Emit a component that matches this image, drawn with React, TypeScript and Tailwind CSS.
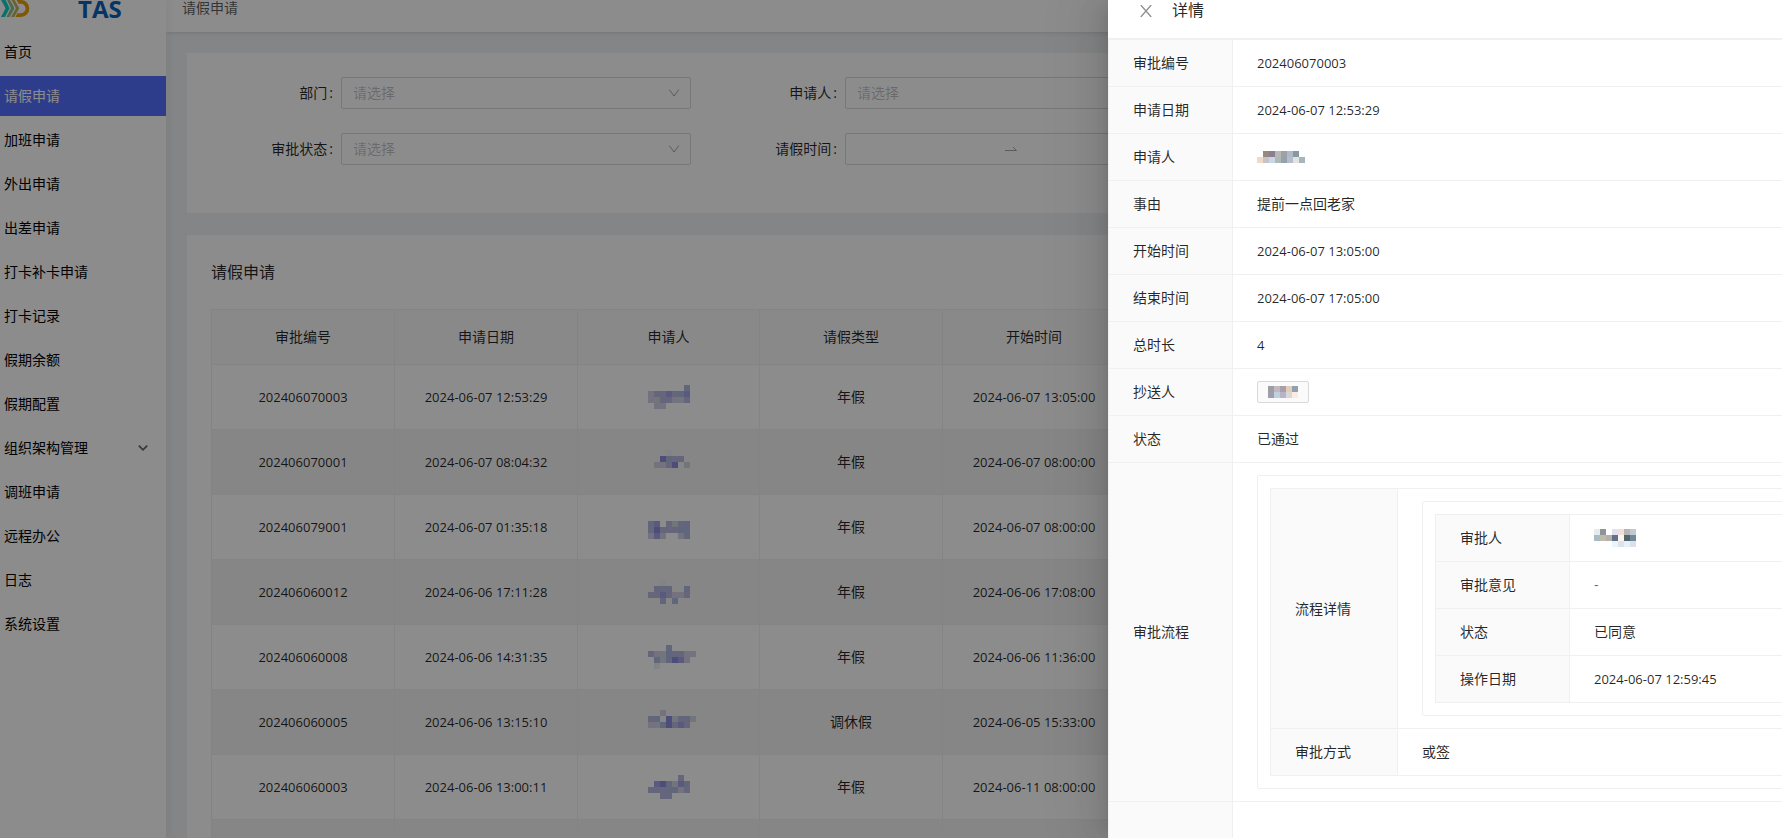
import { ReactNode, useState } from "react";
import clsx from "clsx";

const menu = [
  "首页",
  "请假申请",
  "加班申请",
  "外出申请",
  "出差申请",
  "打卡补卡申请",
  "打卡记录",
  "假期余额",
  "假期配置",
  "组织架构管理",
  "调班申请",
  "远程办公",
  "日志",
  "系统设置",
];

// Tons usados nos nomes ocultos da tabela
const tones: Record<string, string> = {
  a: "#a6a3ea",
  b: "#b9b8e2",
  c: "#d4d0e6",
  d: "#d0d8e2",
  e: "#b0bce4",
  f: "#eeeff4",
  g: "#8b8fdc",
};

const leaves = [
  { id: "202406070003", date: "2024-06-07 12:53:29", type: "年假", start: "2024-06-07 13:05:00", name: ["......e", "cbbabea", "cdbbcdb", ".cc...."] },
  { id: "202406070001", date: "2024-06-07 08:04:32", type: "年假", start: "2024-06-07 08:00:00", name: ["...f...", "..gebb.", ".ccbg.d", "......."] },
  { id: "202406079001", date: "2024-06-07 01:35:18", type: "年假", start: "2024-06-07 08:00:00", name: [".......", "ea.bdbe", "bgbbbee", "cac..db"] },
  { id: "202406060012", date: "2024-06-06 17:11:28", type: "年假", start: "2024-06-06 17:08:00", name: ["..f....", ".ebb..e", "bbabccb", "..e.e.."] },
  { id: "202406060008", date: "2024-06-06 14:31:35", type: "年假", start: "2024-06-06 11:36:00", name: ["...e...", "bcdebbcd", ".edegac", ".f....."] },
  { id: "202406060005", date: "2024-06-06 13:15:10", type: "调休假", start: "2024-06-05 15:33:00", name: ["..c....", "be.gdbed", "cdegbab", "......."] },
  { id: "202406060003", date: "2024-06-06 13:00:11", type: "年假", start: "2024-06-11 08:00:00", name: [".....b.", ".agbdae", "bbbeecb", "..bb..."] },
];

const applicantCells = [
  [".", "#948a80", "#8c8090", "#b8b8ba", "#9da2a5", "#adbbc8", "#8797a3"],
  ["#f0d9c5", "#c9c2c9", "#c4dae8", "#b0b9b0", "#93a2b2", "#b4bdc9", "#e5e3dd", "#a5b6bd"],
];
const ccCells = [
  ["#9c9ea4", "#c4b8c0", "#a8a0aa", "#e0cdba", "#93a0ad"],
  ["#9c9eaa", "#bfd0de", "#b9b4c4", "#dcd6d8", "#fcece0"],
];
const approverCells = [
  ["#e6ecec", "#8f9494", ".", "#dfe1ee", "#f2dcdc", "#b5b5b3", "#c5c8d0"],
  ["#a8bcc4", "#bcbbac", "#b5b0ac", "#65708a", "#faf6ec", "#53646c", "#6e8a96"],
  [".", ".", ".", "#eaf4fa", "#e0e2ea", "#e6f2fa", "#dde0e8"],
];

function Mosaic({ cells, cols }: { cells: string[][]; cols: number }) {
  return (
    <svg width={cols * 6} height={cells.length * 6} className="block overflow-visible" shapeRendering="crispEdges" aria-hidden="true">
      {cells.map((row, y) =>
        row.map((fill, x) => fill !== "." && <rect key={`${x}-${y}`} x={x * 6} y={y * 6} width="6" height="6" fill={fill} />)
      )}
    </svg>
  );
}

function Chevron({ className }: { className?: string }) {
  return (
    <svg viewBox="0 0 12 12" fill="none" stroke="currentColor" className={clsx("size-3", className)} aria-hidden="true">
      <path d="M1.2 2.6 6 9l4.8-6.4" />
    </svg>
  );
}

function Logo() {
  return (
    <svg width="30" height="18" viewBox="0 0 30 18" aria-hidden="true">
      <path d="M1 0h4.6l4 8.2-4.6 8.8H1l4.6-8.8z" fill="#0fd0cb" />
      <path d="M7 0h3l4.6 8.2L9.600 17H6.400l4.600-8.800z" fill="#8fc08a" />
      <path d="M11.600 0h3l4.600 8.200-5 8.800h-3.200l5-8.800z" fill="#c0b060" />
      <path d="M16.600 0H21a8.300 8.500 0 0 1 0 17h-5.600l2-3.800H21a4.600 4.700 0 0 0 0-9.400h-2.400z" fill="#e8a00c" />
    </svg>
  );
}

function Sidebar() {
  const [active, setActive] = useState("请假申请");

  return (
    <aside className="relative z-10 w-[166px] shrink-0 bg-white shadow-[2px_0_8px_rgba(29,35,41,0.06)]">
      <div className="flex h-8 items-start">
        <Logo />
        <span className="ml-12 text-2xl leading-[18px] font-bold text-[#0a62bc]">TAS</span>
      </div>
      <nav className="flex flex-col gap-1">
        {menu.map((item) => (
          <button
            key={item}
            type="button"
            onClick={() => setActive(item)}
            className={clsx(
              "flex h-10 items-center justify-between pl-1 pr-[17px] text-left text-sm",
              active === item ? "bg-[#556dff] text-white" : "text-black"
            )}
          >
            {item}
            {item === "组织架构管理" && (
              <svg viewBox="0 0 12 12" fill="none" stroke="currentColor" strokeWidth="1.8" className="size-3 text-black/60" aria-hidden="true">
                <path d="m1.8 3.6 4.2 4.2 4.2-4.2" />
              </svg>
            )}
          </button>
        ))}
      </nav>
    </aside>
  );
}

function Field({ id, label, children }: { id: string; label: string; children: ReactNode }) {
  return (
    <div className="flex h-8 items-center">
      <label htmlFor={id} className="w-[130px] shrink-0 text-right">
        {label}
        <span className="ml-0.5 mr-2">:</span>
      </label>
      {children}
    </div>
  );
}

function SelectField({ id, label }: { id: string; label: string }) {
  return (
    <Field id={id} label={label}>
      <div className="relative flex-1">
        <select id={id} defaultValue="" className="h-8 w-full appearance-none rounded-xs border border-[#d9d9d9] bg-white px-[11px] text-black/25">
          <option value="">请选择</option>
        </select>
        <Chevron className="pointer-events-none absolute right-[11px] top-[10px] text-black/35" />
      </div>
    </Field>
  );
}

function SearchForm() {
  return (
    <form className="grid grid-cols-3 gap-6 bg-white px-6 pb-12 pt-6">
      <SelectField id="dept" label="部门" />
      <SelectField id="applicant" label="申请人" />
      <div />
      <SelectField id="status" label="审批状态" />
      <Field id="start" label="请假时间">
        <div className="flex h-8 flex-1 items-center rounded-xs border border-[#d9d9d9] px-[11px]">
          <input id="start" type="text" className="w-0 flex-1 outline-none" />
          <svg viewBox="0 0 12 6" fill="none" stroke="currentColor" className="mx-2 h-[6px] w-3 text-black/35" aria-hidden="true">
            <path d="M0 4.5h11.4L8 1" />
          </svg>
          <input type="text" aria-label="结束时间" className="mr-[18px] w-0 flex-1 outline-none" />
        </div>
      </Field>
    </form>
  );
}

function LeaveTable() {
  const cell = "border-b border-r border-[#f0f0f0] text-center font-normal";

  return (
    <section className="flex-1 bg-white px-6">
      <h2 className="flex h-[74px] items-center text-base">请假申请</h2>
      <table className="w-[915px] table-fixed border-separate border-spacing-0 border-l border-t border-[#f0f0f0]">
        <colgroup>
          <col className="w-[183px]" />
          <col className="w-[183px]" />
          <col className="w-[182px]" />
          <col className="w-[183px]" />
          <col className="w-[183px]" />
        </colgroup>
        <thead>
          <tr className="h-[55px] bg-[#fafafa]">
            {["审批编号", "申请日期", "申请人", "请假类型", "开始时间"].map((h) => (
              <th key={h} className={cell}>{h}</th>
            ))}
          </tr>
        </thead>
        <tbody>
          {leaves.map((l) => (
            <tr key={l.id} className="h-[65px] even:bg-[#f5f5f5]">
              <td className={clsx(cell, "text-[13px]")}>{l.id}</td>
              <td className={clsx(cell, "text-[13px]")}>{l.date}</td>
              <td className={cell}>
                <a href="#" aria-label="申请人" className="inline-block align-middle">
                  <Mosaic cols={7} cells={l.name.map((r) => r.split("").map((c) => tones[c] ?? "."))} />
                </a>
              </td>
              <td className={cell}>{l.type}</td>
              <td className={clsx(cell, "text-[13px]")}>{l.start}</td>
            </tr>
          ))}
          <tr className="h-[65px] even:bg-[#f5f5f5]">
            {[0, 1, 2, 3, 4].map((i) => (
              <td key={i} className={cell} />
            ))}
          </tr>
        </tbody>
      </table>
    </section>
  );
}

const thBase = "border-b border-r border-[#f0f0f0] bg-[#fafafa] px-6 py-3 text-left font-normal";
const tdBase = "border-b border-[#f0f0f0] px-6 py-3";

function Row({ label, labelWidth, numeric, children }: { label: string; labelWidth: string; numeric?: boolean; children?: ReactNode }) {
  return (
    <tr className="h-[47px]">
      <th scope="row" className={clsx(thBase, labelWidth)}>{label}</th>
      <td className={clsx(tdBase, numeric && "text-[13px]")}>{children}</td>
    </tr>
  );
}

function Descriptions({ children }: { children: ReactNode }) {
  return (
    <table className="w-full table-fixed border-separate border-spacing-0 border-l border-t border-[#f0f0f0]">
      <tbody>{children}</tbody>
    </table>
  );
}

function DetailDrawer({ onClose }: { onClose: () => void }) {
  return (
    <aside className="absolute inset-y-0 right-0 w-[674px] max-w-full overflow-hidden bg-white shadow-[-6px_0_16px_-8px_rgba(0,0,0,0.12),-9px_0_28px_rgba(0,0,0,0.08),-12px_0_48px_16px_rgba(0,0,0,0.05)]">
      <header className="flex h-[39px] items-start border-b border-[#f0f0f0] pl-8">
        <button type="button" aria-label="关闭" onClick={onClose} className="mt-[5px] text-black/45">
          <svg width="12" height="12" viewBox="0 0 12 12" fill="none" stroke="currentColor" strokeWidth="1.3">
            <path d="M.8 0 11.2 12M11.2 0 .8 12" />
          </svg>
        </button>
        <h2 className="ml-5 text-base leading-5">详情</h2>
      </header>
      {/* largura extra: as bordas direitas ficam fora da área visível */}
      <div className="w-[760px]">
        <Descriptions>
          <Row label="审批编号" labelWidth="w-[124px]" numeric>202406070003</Row>
          <Row label="申请日期" labelWidth="w-[124px]" numeric>2024-06-07 12:53:29</Row>
          <Row label="申请人" labelWidth="w-[124px]"><Mosaic cols={8} cells={applicantCells} /></Row>
          <Row label="事由" labelWidth="w-[124px]">提前一点回老家</Row>
          <Row label="开始时间" labelWidth="w-[124px]" numeric>2024-06-07 13:05:00</Row>
          <Row label="结束时间" labelWidth="w-[124px]" numeric>2024-06-07 17:05:00</Row>
          <Row label="总时长" labelWidth="w-[124px]" numeric>4</Row>
          <Row label="抄送人" labelWidth="w-[124px]">
            <span className="flex h-[22px] w-[52px] items-center justify-center rounded-xs border border-[#d9d9d9] bg-[#fafafa]">
              <Mosaic cols={5} cells={ccCells} />
            </span>
          </Row>
          <Row label="状态" labelWidth="w-[124px]">已通过</Row>
          <Row label="审批流程" labelWidth="w-[124px]">
            <div className="rounded-xs border border-[#f0f0f0] p-3">
              <Descriptions>
                <Row label="流程详情" labelWidth="w-[127px]">
                  <div className="w-[480px] rounded-xs border border-[#f0f0f0] p-3">
                    <Descriptions>
                      <Row label="审批人" labelWidth="w-[134px]"><Mosaic cols={7} cells={approverCells} /></Row>
                      <Row label="审批意见" labelWidth="w-[134px]"><span className="text-black/60">-</span></Row>
                      <Row label="状态" labelWidth="w-[134px]">已同意</Row>
                      <Row label="操作日期" labelWidth="w-[134px]" numeric>2024-06-07 12:59:45</Row>
                    </Descriptions>
                  </div>
                </Row>
                <Row label="审批方式" labelWidth="w-[127px]">或签</Row>
              </Descriptions>
            </div>
          </Row>
          <Row label="" labelWidth="w-[124px]" />
        </Descriptions>
      </div>
    </aside>
  );
}

export default function App() {
  const [open, setOpen] = useState(true);

  return (
    <div className="relative h-screen overflow-hidden bg-[#f0f2f5] font-['Open_Sans','Noto_Sans_CJK_SC',sans-serif] text-sm leading-[22px] text-black/85">
      <div className="flex h-full">
        <Sidebar />
        <div className="flex min-w-0 flex-1 flex-col">
          <header className="h-8 shrink-0 bg-white pl-4 shadow-[0_1px_4px_rgba(0,21,41,0.12)]">
            <p className="leading-4 text-black/65">请假申请</p>
          </header>
          <main className="flex flex-1 flex-col gap-[22px] overflow-hidden pl-[21px] pr-[59px] pt-[21px]">
            <SearchForm />
            <LeaveTable />
          </main>
        </div>
      </div>

      {open && (
        <div className="absolute inset-0 z-20">
          <div className="absolute inset-0 bg-black/45" onClick={() => setOpen(false)} />
          <DetailDrawer onClose={() => setOpen(false)} />
        </div>
      )}
    </div>
  );
}
